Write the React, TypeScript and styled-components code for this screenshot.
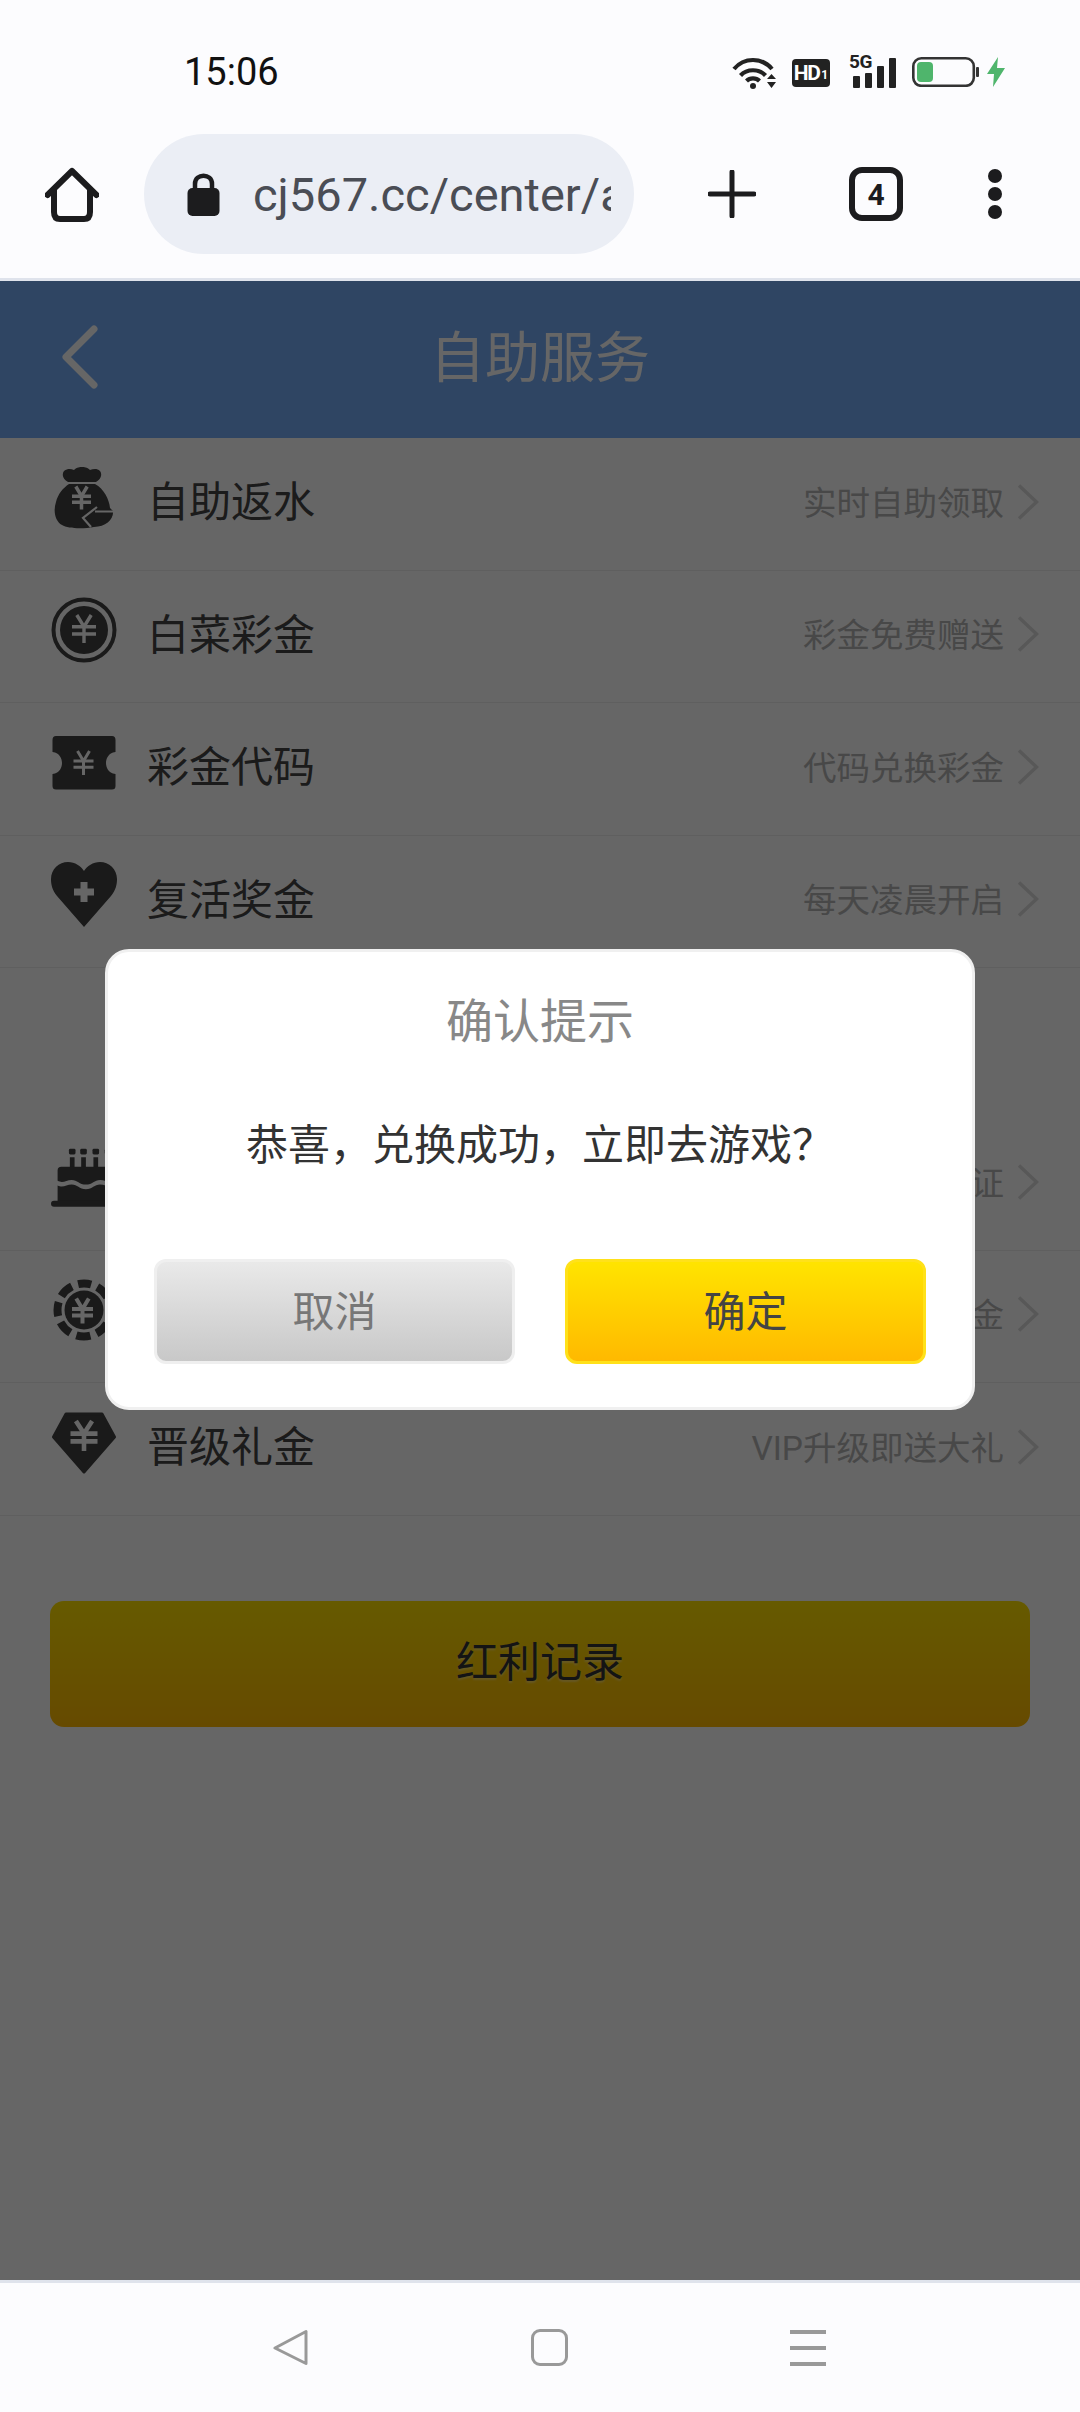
import styled, { createGlobalStyle } from 'styled-components';

const GlobalStyle = createGlobalStyle`
  html, body {
    margin: 0;
    padding: 0;
    background: #fcfcfe;
  }
  body {
    font-family: Roboto, "Noto Sans CJK SC", sans-serif;
  }
  * {
    box-sizing: border-box;
  }
`;

function Yen({ cx, cy, w, h, sw, color = '#fff' }: { cx: number; cy: number; w: number; h: number; sw: number; color?: string }) {
  const l = cx - w / 2;
  const r = cx + w / 2;
  const t = cy - h / 2;
  const b = cy + h / 2;
  const mid = t + h * 0.42;
  return (
    <g stroke={color} strokeWidth={sw} fill="none">
      <path d={`M${l + w * 0.2} ${t} L${cx} ${mid} L${r - w * 0.2} ${t}`} />
      <path d={`M${l} ${mid} H${r} M${l} ${t + h * 0.68} H${r} M${cx} ${mid} V${b}`} />
    </g>
  );
}

const ICON = '#414141';

function BagIcon() {
  return (
    <svg width="60" height="62" viewBox="0 0 60 62">
      <path
        fill={ICON}
        d="M10 4 C14 1 17 2 20 3 C23 0 26 0 28 0 C30 0 33 0 36 3 C39 2 43 1 46 4 C49 8 46 13 42 15 H14 C10 13 7 8 10 4 Z"
      />
      <path
        fill={ICON}
        d="M15 17 H41 C50 22 55 32 56 41 L59 44 C60 52 52 60 40 60 C30 62 14 62 8 58 C1 54 -1 44 2 35 C4 27 9 21 15 17 Z"
      />
      <Yen cx={27.5} cy={31} w={19} h={23} sw={3.5} />
      <path d="M43 40 L29 51 L37 60 M41 44.500 H60" fill="none" stroke="#fff" strokeWidth="2.200" />
    </svg>
  );
}

function CoinIcon() {
  return (
    <svg width="66" height="66" viewBox="0 0 66 66">
      <circle cx="33" cy="33" r="30.5" fill="none" stroke={ICON} strokeWidth="4" />
      <circle cx="33" cy="33" r="24" fill={ICON} />
      <Yen cx={33} cy={32} w={24} h={28} sw={3.4} />
    </svg>
  );
}

function TicketIcon() {
  return (
    <svg width="64" height="54" viewBox="0 0 64 54">
      <path
        fill={ICON}
        d="M4 0 H60 Q63.500 0 63.500 4 V16 C56 17 54 23 54 27 C54 31 56 37 63.500 38 V50 Q63.500 53.500 60 53.500 H4 Q0.500 53.500 0.500 50 V38 C8 37 10 31 10 27 C10 23 8 17 0.500 16 V4 Q0.500 0 4 0 Z"
      />
      <Yen cx={31.500} cy={27} w={20} h={24} sw={3} />
    </svg>
  );
}

function HeartIcon() {
  return (
    <svg width="66" height="66" viewBox="0 0 66 66">
      <path
        fill={ICON}
        d="M33 65 L6 34 C1 28 0 22 0 17 C0 7 8 0 17 0 C24 0 30 4 33 9 C36 4 42 0 49 0 C58 0 66 7 66 17 C66 22 65 28 60 34 Z"
      />
      <path fill="#fff" d="M29.500 20 H36.500 V26.500 H43 V33.500 H36.500 V40 H29.500 V33.500 H23 V26.500 H29.500 Z" />
    </svg>
  );
}

function CakeIcon() {
  return (
    <svg width="70" height="62" viewBox="0 0 70 62">
      <g fill={ICON}>
        <rect x="19" y="0" width="7" height="6" rx="1.500" />
        <rect x="31" y="0" width="7" height="6" rx="1.500" />
        <rect x="44" y="0" width="7" height="6" rx="1.500" />
        <rect x="57" y="0" width="7" height="6" rx="1.500" />
        <rect x="20" y="9" width="5" height="12" />
        <rect x="32" y="9" width="5" height="12" />
        <rect x="45" y="9" width="5" height="12" />
        <rect x="58" y="9" width="5" height="12" />
        <path d="M11 19 Q7 19 7 23 V34 C13 37 16 33 22 33 C28 33 30 38 37 38 C44 38 46 33 52 33 C58 33 61 37 70 34 V19 Z" />
        <path d="M7 39 C13 42 16 38 22 38 C28 38 30 43 37 43 C44 43 46 38 52 38 C58 38 61 42 70 39 V56 H7 Z" />
        <rect x="0" y="55" width="70" height="6.500" rx="3.200" />
      </g>
    </svg>
  );
}

function ChipIcon() {
  return (
    <svg width="62" height="62" viewBox="0 0 62 62">
      <circle cx="31" cy="31" r="26.500" fill="none" stroke={ICON} strokeWidth="8" strokeDasharray="14.300 6.500" strokeDashoffset="7" transform="rotate(-90 31 31)" />
      <circle cx="31" cy="31" r="19.500" fill={ICON} />
      <Yen cx={29.500} cy={32} w={21} h={25} sw={4} />
    </svg>
  );
}

function DiamondIcon() {
  return (
    <svg width="66" height="62" viewBox="0 0 66 62">
      <path
        fill={ICON}
        stroke={ICON}
        strokeWidth="3"
        strokeLinejoin="round"
        d="M15 2 H51 L63.500 25 L33 60 L2.500 25 Z"
      />
      <Yen cx={33} cy={24} w={27} h={30} sw={4.600} />
    </svg>
  );
}

type RowData = { icon: React.ReactNode; label?: string; hint: string };

const FIRST_ROWS: RowData[] = [
  { icon: <BagIcon />, label: '自助返水', hint: '实时自助领取' },
  { icon: <CoinIcon />, label: '白菜彩金', hint: '彩金免费赠送' },
  { icon: <TicketIcon />, label: '彩金代码', hint: '代码兑换彩金' },
  { icon: <HeartIcon />, label: '复活奖金', hint: '每天凌晨开启' },
];

const SECOND_ROWS: RowData[] = [
  { icon: <CakeIcon />, hint: '证' },
  { icon: <ChipIcon />, hint: '金' },
  { icon: <DiamondIcon />, label: '晋级礼金', hint: 'VIP升级即送大礼' },
];

// full-width punctuation, written as escapes so it cannot get flattened to ascii
const DIALOG_MESSAGE = '恭喜\uFF0C兑换成功\uFF0C立即去游戏\uFF1F';

function ServiceRow({ row }: { row: RowData }) {
  return (
    <Row>
      <RowIcon>{row.icon}</RowIcon>
      <RowLabel>{row.label}</RowLabel>
      <RowHint>{row.hint}</RowHint>
      <RowChevron width="22" height="36" viewBox="0 0 22 36">
        <path d="M2 1.500 L19.500 18 L2 34.500" fill="none" stroke="#dcdcdc" strokeWidth="3.400" />
      </RowChevron>
    </Row>
  );
}

export default function App() {
  return (
    <>
      <GlobalStyle />
      <Screen>
        <StatusBar>
          <Clock>15:06</Clock>
          <StatusIcons>
            <svg width="44" height="33" viewBox="0 0 44 33">
              <g fill="none" stroke="#222" strokeWidth="4.200">
                <path d="M2 13 C12 1 30 1 40 13" />
                <path d="M8.500 19.500 C15 12.500 27 12.500 33.500 19.500" />
                <path d="M14.500 25 C18 21.500 24 21.500 27.500 25" />
              </g>
              <circle cx="21" cy="30" r="3" fill="#222" />
              <path d="M35 23 H44 L39.500 18 Z M35 26 H44 L39.500 32 Z" fill="#222" />
            </svg>
            <HdBadge>
              HD<HdSmall>1</HdSmall>
            </HdBadge>
            <Signal>
              <SignalType>5G</SignalType>
              <svg width="47" height="32" viewBox="0 0 47 32">
                <g fill="#222">
                  <rect x="4" y="20" width="7" height="12" rx="1" />
                  <rect x="16" y="17" width="7" height="15" rx="1" />
                  <rect x="28" y="10" width="7" height="22" rx="1" />
                  <rect x="40" y="2" width="7" height="30" rx="1" />
                </g>
              </svg>
            </Signal>
            <svg width="67" height="30" viewBox="0 0 67 30">
              <rect x="1.300" y="1.300" width="60.500" height="27.500" rx="8" fill="none" stroke="#333" strokeWidth="2.600" />
              <rect x="5" y="5" width="16" height="20" rx="4" fill="#4fb56c" />
              <rect x="64" y="10" width="3" height="10" rx="1" fill="#333" />
            </svg>
            <svg width="18" height="30" viewBox="0 0 18 30">
              <path d="M11 0 L0 17 H7 L6 30 L18 11 H10 Z" fill="#4fb56c" />
            </svg>
          </StatusIcons>
        </StatusBar>

        <BrowserBar>
          <HomeButton>
            <svg width="54" height="56" viewBox="0 0 54 56">
              <path d="M2.500 29 L27 5 L51.500 29" fill="none" stroke="#1c1c1e" strokeWidth="6" strokeLinecap="round" strokeLinejoin="round" />
              <path d="M9 24 V46 Q9 53 15 53 H39 Q45 53 45 46 V24" fill="none" stroke="#1c1c1e" strokeWidth="6" />
            </svg>
          </HomeButton>
          <AddressPill>
            <svg width="33" height="43" viewBox="0 0 33 43">
              <path d="M8 18 V11 C8 0 25 0 25 11 V18" fill="none" stroke="#1c1c1e" strokeWidth="4.500" />
              <rect x="0.500" y="15" width="32" height="28" rx="5" fill="#1c1c1e" />
            </svg>
            <AddressText>cj567.cc/center/activity</AddressText>
          </AddressPill>
          <PlusButton>
            <svg width="48" height="48" viewBox="0 0 48 48">
              <path d="M24 2 V46 M2 24 H46" stroke="#1c1c1e" strokeWidth="5" strokeLinecap="round" />
            </svg>
          </PlusButton>
          <TabCount>4</TabCount>
          <MenuButton>
            <svg width="14" height="50" viewBox="0 0 14 50">
              <circle cx="7" cy="7" r="7" fill="#1c1c1e" />
              <circle cx="7" cy="25" r="7" fill="#1c1c1e" />
              <circle cx="7" cy="43" r="7" fill="#1c1c1e" />
            </svg>
          </MenuButton>
        </BrowserBar>

        <Viewport>
          <PageHeader>
            <BackButton>
              <svg width="38" height="64" viewBox="0 0 38 64">
                <path d="M33 4 L5 32 L33 60" fill="none" stroke="#fff" strokeWidth="7" strokeLinecap="round" strokeLinejoin="round" />
              </svg>
            </BackButton>
            <PageTitle>自助服务</PageTitle>
          </PageHeader>

          <RowGroup>
            {FIRST_ROWS.map((row) => (
              <ServiceRow key={row.hint} row={row} />
            ))}
          </RowGroup>
          <RowGroup $gap={150}>
            {SECOND_ROWS.map((row) => (
              <ServiceRow key={row.hint} row={row} />
            ))}
          </RowGroup>
          <RecordButton>红利记录</RecordButton>

          <Overlay>
            <Dialog>
              <DialogTitle>确认提示</DialogTitle>
              <DialogMessage>{DIALOG_MESSAGE}</DialogMessage>
              <DialogActions>
                <CancelButton>取消</CancelButton>
                <ConfirmButton>确定</ConfirmButton>
              </DialogActions>
            </Dialog>
          </Overlay>
        </Viewport>

        <BottomNav>
          <svg width="36" height="38" viewBox="0 0 36 38">
            <path d="M33 2.500 V34.500 L2 19 Z" fill="none" stroke="#999" strokeWidth="3" strokeLinejoin="round" />
          </svg>
          <NavSquare />
          <NavLines>
            <NavLine />
            <NavLine />
            <NavLine />
          </NavLines>
        </BottomNav>
      </Screen>
    </>
  );
}

/* ---- styled ---- */

const Screen = styled.div`
  width: 1080px;
  height: 2412px;
  display: flex;
  flex-direction: column;
  background: #fcfcfe;
  overflow: hidden;
`;

const StatusBar = styled.div`
  height: 100px;
  padding: 44px 75px 0 184px;
  display: flex;
  align-items: center;
  justify-content: space-between;
`;

const Clock = styled.span`
  font-size: 38px;
  color: #111;
`;

const StatusIcons = styled.div`
  display: flex;
  align-items: center;
  gap: 8px;
`;

const HdBadge = styled.span`
  width: 38px;
  height: 28px;
  margin: 1px 8px 0;
  border-radius: 4px;
  background: #222;
  color: #fff;
  font-size: 21px;
  font-weight: 700;
  letter-spacing: -1.5px;
  display: flex;
  align-items: center;
  justify-content: center;
`;

const HdSmall = styled.span`
  font-size: 12px;
  margin-left: 2px;
  margin-top: 5px;
  letter-spacing: 0;
`;

const Signal = styled.div`
  position: relative;
  width: 47px;
  height: 32px;
  margin: 0 8px 0 3px;
`;

const SignalType = styled.span`
  position: absolute;
  left: 0;
  top: -3px;
  font-size: 19px;
  font-weight: 700;
  line-height: 18px;
  letter-spacing: -0.5px;
  color: #222;
`;

const BrowserBar = styled.div`
  height: 181px;
  padding: 34px 0 24px 45px;
  display: flex;
  align-items: center;
  border-bottom: 3px solid #dfe3ec;
`;

const HomeButton = styled.div`
  width: 54px;
  height: 56px;
`;

const AddressPill = styled.div`
  width: 490px;
  height: 120px;
  margin-left: 45px;
  padding-left: 43px;
  border-radius: 60px;
  background: #ebeef5;
  display: flex;
  align-items: center;
  gap: 33px;
`;

const AddressText = styled.span`
  width: 358px;
  overflow: hidden;
  white-space: nowrap;
  font-size: 47px;
  color: #4a4d55;
`;

const PlusButton = styled.div`
  width: 48px;
  height: 48px;
  margin-left: 74px;
`;

const TabCount = styled.div`
  width: 54px;
  height: 54px;
  margin-left: 93px;
  border: 6px solid #1c1c1e;
  border-radius: 13px;
  display: flex;
  align-items: center;
  justify-content: center;
  font-size: 30px;
  font-weight: 700;
  color: #1c1c1e;
`;

const MenuButton = styled.div`
  width: 14px;
  height: 50px;
  margin-left: 85px;
`;

const Viewport = styled.div`
  position: relative;
  flex: 1;
  background: #fff;
`;

const PageHeader = styled.header`
  position: relative;
  height: 157px;
  padding-bottom: 14px;
  background: #75acf8;
  display: flex;
  align-items: center;
  justify-content: center;
`;

const BackButton = styled.div`
  position: absolute;
  left: 61px;
  top: 44px;
  width: 38px;
  height: 64px;
`;

const PageTitle = styled.h1`
  margin: 0;
  font-size: 55px;
  font-weight: 400;
  color: #fff;
`;

const RowGroup = styled.div<{ $gap?: number }>`
  margin-top: ${(p) => p.$gap ?? 0}px;
`;

const Row = styled.div`
  height: 132.5px;
  padding: 0 41px 10px 51px;
  border-bottom: 1.5px solid #eee;
  display: flex;
  align-items: center;
`;

const RowIcon = styled.div`
  width: 66px;
  display: flex;
  justify-content: center;
  margin-top: -2px;
`;

const RowLabel = styled.span`
  flex: 1;
  margin-left: 30px;
  font-size: 42px;
  color: #444;
`;

const RowHint = styled.span`
  margin: 3px 13px 0 0;
  font-size: 33.500px;
  color: #b4b4b4;
`;

const RowChevron = styled.svg`
  margin-top: 6px;
`;

const RecordButton = styled.div`
  height: 126px;
  margin: 85.5px 50px 0;
  padding-bottom: 12px;
  border-radius: 14px;
  background: linear-gradient(#ffe100, #ffb900);
  display: flex;
  align-items: center;
  justify-content: center;
  font-size: 42px;
  color: #333;
  text-shadow: 0 2px 2px rgba(255, 255, 255, 0.35);
`;

const Overlay = styled.div`
  position: absolute;
  inset: 0;
  padding-top: 668px;
  background: rgba(0, 0, 0, 0.6);
  display: flex;
  flex-direction: column;
  align-items: center;
`;

const Dialog = styled.div`
  width: 870px;
  height: 461px;
  padding-top: 40px;
  border: 3px solid #f0f0f0;
  border-radius: 24px;
  background: #fff;
  display: flex;
  flex-direction: column;
  align-items: center;
`;

const DialogTitle = styled.div`
  height: 60px;
  line-height: 60px;
  font-size: 47px;
  color: #888;
`;

const DialogMessage = styled.div`
  flex: 1;
  padding-bottom: 28px;
  display: flex;
  align-items: center;
  font-size: 42px;
  color: #333;
`;

const DialogActions = styled.div`
  margin-bottom: 43px;
  display: flex;
  gap: 50px;
`;

const ActionButton = styled.div`
  width: 361px;
  height: 105px;
  padding-bottom: 6px;
  border-radius: 12px;
  border-style: solid;
  border-width: 3px;
  display: flex;
  align-items: center;
  justify-content: center;
  font-size: 42px;
`;

const CancelButton = styled(ActionButton)`
  border-color: #efefef;
  background: linear-gradient(#e9e9e9, #c8c8c8);
  color: #777;
`;

const ConfirmButton = styled(ActionButton)`
  border-color: #ffe11a;
  background: linear-gradient(#ffe400, #ffb900);
  color: #444;
`;

const BottomNav = styled.nav`
  height: 132px;
  padding-left: 273px;
  border-top: 3px solid #dfe3ec;
  display: flex;
  align-items: center;
  gap: 222px;
`;

const NavSquare = styled.div`
  width: 37px;
  height: 37px;
  border: 3px solid #999;
  border-radius: 9px;
`;

const NavLines = styled.div`
  width: 36px;
  height: 36px;
  display: flex;
  flex-direction: column;
  justify-content: space-between;
`;

const NavLine = styled.div`
  height: 4px;
  background: #999;
`;
